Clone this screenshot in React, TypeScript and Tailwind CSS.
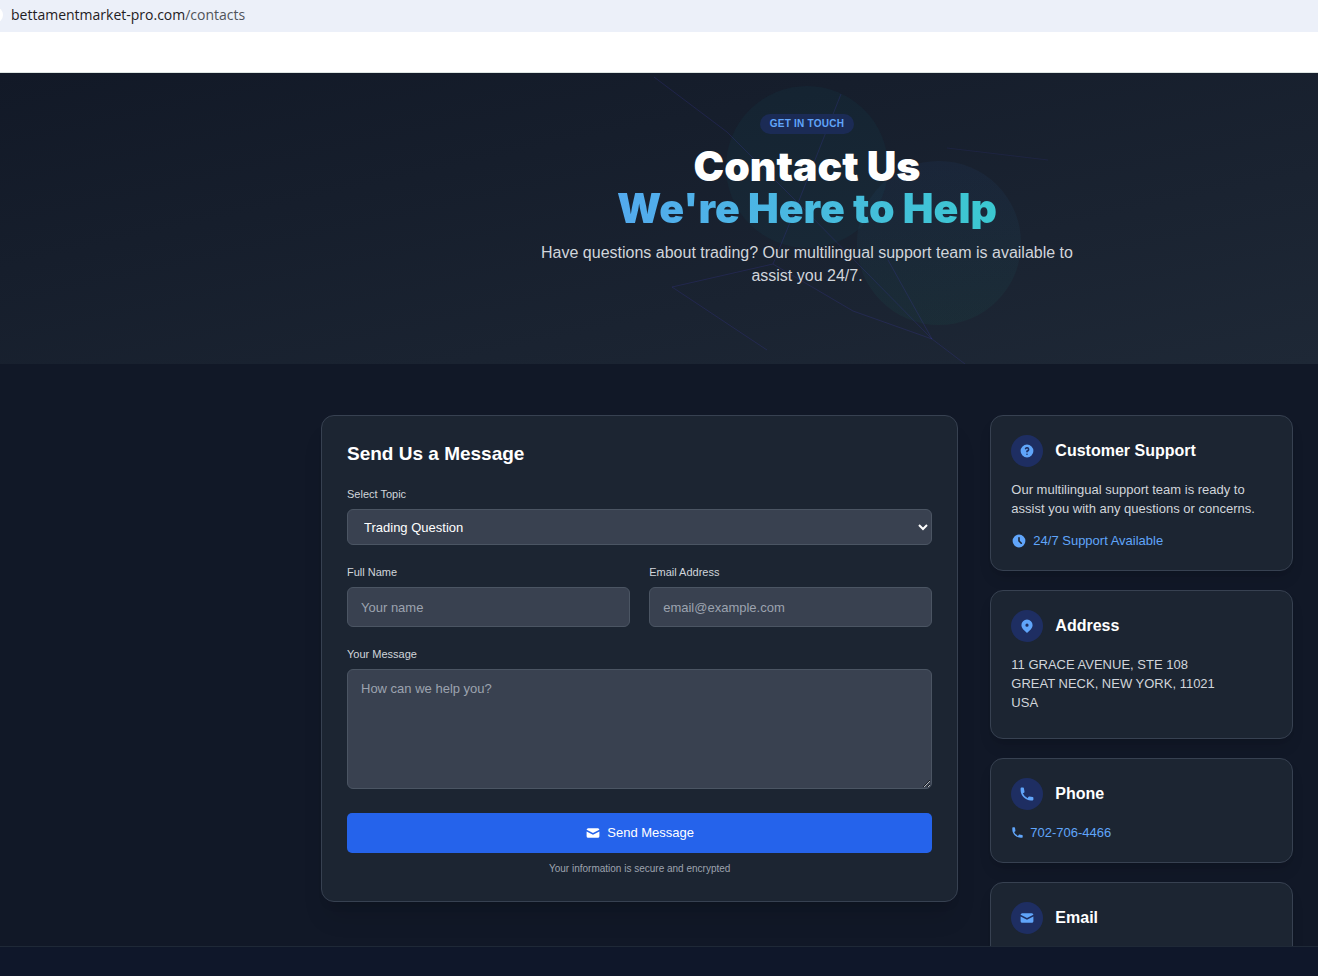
import type { ReactNode } from "react";

const HELP =
  "M18 10a8 8 0 11-16 0 8 8 0 0116 0zm-8-3a1 1 0 00-.867.5 1 1 0 11-1.731-1A3 3 0 0113 8a3.001 3.001 0 01-2 2.83V11a1 1 0 11-2 0v-1a1 1 0 011-1 1 1 0 100-2zm0 8a1 1 0 100-2 1 1 0 000 2z";
const CLOCK =
  "M10 18a8 8 0 100-16 8 8 0 000 16zm1-12a1 1 0 10-2 0v4a1 1 0 00.293.707l2.828 2.829a1 1 0 101.415-1.415L11 9.586V6z";
const PIN =
  "M5.05 4.05a7 7 0 119.9 9.9L10 18.9l-4.95-4.95a7 7 0 010-9.9zM10 11a2 2 0 100-4 2 2 0 000 4z";
const PHONE =
  "M2 3a1 1 0 011-1h2.153a1 1 0 01.986.836l.74 4.435a1 1 0 01-.54 1.06l-1.548.773a11.037 11.037 0 006.105 6.105l.774-1.548a1 1 0 011.059-.54l4.435.74a1 1 0 01.836.986V17a1 1 0 01-1 1h-2C7.82 18 2 12.18 2 5V3z";
const MAIL =
  "M2.003 5.884L10 9.882l7.997-3.998A2 2 0 0016 4H4a2 2 0 00-1.997 1.884z M18 8.118l-8 4-8-4V14a2 2 0 002 2h12a2 2 0 002-2V8.118z";

function Icon({ d, className }: { d: string; className: string }) {
  return (
    <svg viewBox="0 0 20 20" fill="currentColor" fillRule="evenodd" aria-hidden="true" className={className}>
      <path d={d} />
    </svg>
  );
}

function InfoCard({ icon, title, children }: { icon: string; title: string; children?: ReactNode }) {
  return (
    <section className="rounded-[13px] border border-[#374151] bg-[#1c2532] p-5 pt-[19px] shadow-lg">
      <div className="flex items-center gap-3">
        <span className="flex size-8 shrink-0 items-center justify-center rounded-full bg-[#1e2e62] text-[#60a5fa]">
          <Icon d={icon} className="size-4" />
        </span>
        <h3 className="text-base leading-6 font-bold text-white">{title}</h3>
      </div>
      {children}
    </section>
  );
}

const labelStyle = "mb-[7px] block text-[11px] leading-4 font-medium text-[#d1d5db]";
const fieldStyle =
  "block w-full rounded-md border border-[#4b5563] bg-[#394150] text-[13px] text-white placeholder:text-[#9ca3af]";

export default function App() {
  return (
    <div className="flex h-screen flex-col overflow-hidden bg-[#111827] font-['Liberation_Sans',Arial,sans-serif]">
      <div className="flex h-8 shrink-0 items-center bg-[#ecf0f9] pb-0.5">
        <span className="-ml-[13px] size-4 rounded-full bg-white" />
        <span className="ml-2 font-['Open_Sans','Noto_Sans',sans-serif] text-sm text-[#1f2023]">
          bettamentmarket-pro.com<span className="text-[#50545a]">/contacts</span>
        </span>
      </div>
      <div className="h-[41px] shrink-0 border-b border-[#dde5e2] bg-white" />

      <main className="min-h-0 flex-1 overflow-hidden">
        <header className="relative bg-linear-to-br from-[#121927] to-[#1e2836] pt-[41px] pb-[77px] pl-[296px]">
          <svg viewBox="0 0 400 291" fill="none" className="absolute top-0 left-[648px] h-[291px] w-[400px]" aria-hidden="true">
            <defs>
              <linearGradient id="orb" x1="0" y1="0" x2="0" y2="1">
                <stop offset="0" stopColor="#3b82f6" />
                <stop offset="1" stopColor="#10b981" />
              </linearGradient>
            </defs>
            <circle cx="159" cy="94" r="81" fill="#14a3b8" fillOpacity="0.05" />
            <circle cx="291" cy="170" r="82" fill="url(#orb)" fillOpacity="0.05" />
            <g stroke="#4f46e5" strokeOpacity="0.16">
              <path d="M6 4 79 59 150 130 284 266 317 291" />
              <path d="M193 21 150 130 125 191 24 214 119 277" />
              <path d="M125 191 205 238 284 266 240 187" />
              <path d="M299 75 400 87" strokeOpacity="0.1" />
            </g>
          </svg>
          <div className="relative flex flex-col items-center text-center">
            <span className="rounded-full bg-[#1b2b55] px-2.5 text-[10px] leading-5 font-bold tracking-wide text-[#60a5fa]">
              GET IN TOUCH
            </span>
            <h1 className="mt-[11px] font-['Inter','Liberation_Sans',sans-serif] text-[41px] leading-[42px] font-black text-white">
              <span className="block">Contact Us</span>
              <span className="block bg-linear-to-r from-[#53aaee] to-[#3bc8d0] bg-clip-text text-transparent">
                We're Here to Help
              </span>
            </h1>
            <p className="mt-3 max-w-[540px] text-base leading-[23px] text-[#d1d5db]">
              Have questions about trading? Our multilingual support team is available to assist you 24/7.
            </p>
          </div>
        </header>

        <div className="grid grid-cols-3 items-start gap-8 pt-[51px] pr-[25px] pl-[321px]">
          <section className="col-span-2 rounded-[13px] border border-[#374151] bg-[#1c2532] px-[25px] py-6 shadow-xl">
            <h2 className="text-[19px] leading-7 font-bold text-white">Send Us a Message</h2>
            <form className="mt-[18px]" onSubmit={(e) => e.preventDefault()}>
              <label htmlFor="topic" className={labelStyle}>Select Topic</label>
              <select id="topic" className={`${fieldStyle} h-9 px-3`}>
                <option>Trading Question</option>
              </select>
              <div className="mt-[19px] grid grid-cols-2 gap-[19px]">
                <div>
                  <label htmlFor="name" className={labelStyle}>Full Name</label>
                  <input id="name" type="text" placeholder="Your name" className={`${fieldStyle} h-10 px-[13px]`} />
                </div>
                <div>
                  <label htmlFor="email" className={labelStyle}>Email Address</label>
                  <input id="email" type="email" placeholder="email@example.com" className={`${fieldStyle} h-10 px-[13px]`} />
                </div>
              </div>
              <label htmlFor="message" className={`${labelStyle} mt-[19px]`}>Your Message</label>
              <textarea
                id="message"
                placeholder="How can we help you?"
                className={`${fieldStyle} h-[120px] resize-y px-[13px] py-[9px] leading-[19px]`}
              />
              <button
                type="submit"
                className="mt-6 flex h-10 w-full items-center justify-center gap-1.5 rounded-[5px] bg-[#2563eb] text-[13px] font-medium text-white"
              >
                <Icon d={MAIL} className="size-4" />
                Send Message
              </button>
              <p className="mt-2 text-center text-[10px] leading-4 text-[#9ca3af]">
                Your information is secure and encrypted
              </p>
            </form>
          </section>

          <div className="flex flex-col gap-[19px]">
            <InfoCard icon={HELP} title="Customer Support">
              <p className="mt-[13px] text-[13px] leading-[19px] text-[#d1d5db]">
                Our multilingual support team is ready to assist you with any questions or concerns.
              </p>
              <p className="mt-[13px] flex items-center gap-1.5 text-[13px] leading-[19px] text-[#60a5fa]">
                <Icon d={CLOCK} className="size-4" />
                24/7 Support Available
              </p>
            </InfoCard>
            <InfoCard icon={PIN} title="Address">
              <address className="mt-[13px] mb-1.5 text-[13px] leading-[19px] text-[#d1d5db] not-italic">
                11 GRACE AVENUE, STE 108
                <br />
                GREAT NECK, NEW YORK, 11021
                <br />
                USA
              </address>
            </InfoCard>
            <InfoCard icon={PHONE} title="Phone">
              <a
                href="tel:702-706-4466"
                className="mt-[13px] flex items-center gap-1.5 text-[13px] leading-[19px] text-[#60a5fa]"
              >
                <Icon d={PHONE} className="size-[13px]" />
                702-706-4466
              </a>
            </InfoCard>
            <InfoCard icon={MAIL} title="Email">
              <div className="h-8" />
            </InfoCard>
          </div>
        </div>
      </main>

      <footer className="relative h-[30px] shrink-0 border-t border-[#1f2937] bg-[#0f172a]" />
    </div>
  );
}
